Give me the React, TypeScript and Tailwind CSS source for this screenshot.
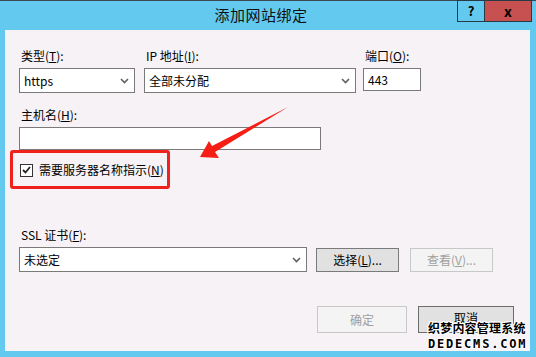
import React from "react";

const font = { fontFamily: '"Noto Sans CJK SC", "Noto Sans", sans-serif' };

function Chevron() {
  return (
    <svg width="9" height="6" viewBox="0 0 9 6" className="shrink-0">
      <path d="M1 1 L4.5 4.5 L8 1" fill="none" stroke="#606060" strokeWidth="1.6" />
    </svg>
  );
}

function Select({ value, w }: { value: string; w: string }) {
  return (
    <div className={`${w} h-[25px] bg-white border border-[#7a7a7a] flex items-center pl-[4px] pr-[5px] text-[12px] text-black`}>
      <span className="flex-1">{value}</span>
      <Chevron />
    </div>
  );
}

function Label({ children }: { children: React.ReactNode }) {
  return <div className="h-[16px] leading-[16px] text-[12px] text-black pl-[2px]">{children}</div>;
}

export default function App() {
  return (
    <div className="relative w-[536px] h-[357px] bg-[#63c9ef] overflow-hidden flex flex-col" style={font}>
      {/* title bar */}
      <div className="relative h-[30px] border-t border-[#3a4a55] flex items-center justify-center pr-[14px]">
        <span className="text-[15px] text-[#111] tracking-[0.5px]">添加网站绑定</span>
        <div className="absolute right-[4px] top-[-1px] flex h-[22px] border border-[#2a3a44]">
          <div className="w-[27px] flex items-center justify-center text-[13px] font-bold text-black border-r border-[#2a3a44]">?</div>
          <div className="w-[46px] bg-[#c75050] flex items-center justify-center text-[14px] font-bold text-black leading-none">x</div>
        </div>
      </div>

      {/* client area */}
      <div className="ml-[5px] mr-[6px] h-[321px] bg-[#f6f2f6] pl-[14px] flex flex-col">
        <div className="mt-[18px] flex">
          <div className="w-[116px] flex flex-col gap-[4px]">
            <Label>类型(<span className="underline">T</span>):</Label>
            <Select value="https" w="w-[116px]" />
          </div>
          <div className="ml-[9px] w-[212px] flex flex-col gap-[4px]">
            <Label>IP 地址(<span className="underline">I</span>):</Label>
            <Select value="全部未分配" w="w-[212px]" />
          </div>
          <div className="ml-[7px] w-[58px] flex flex-col gap-[4px]">
            <Label>端口(<span className="underline">O</span>):</Label>
            <div className="w-[58px] h-[23px] bg-white border border-[#7a7a7a] flex items-center pl-[4px] text-[12px] text-black">443</div>
          </div>
        </div>

        <div className="mt-[14px] flex flex-col gap-[4px]">
          <Label>主机名(<span className="underline">H</span>):</Label>
          <div className="w-[302px] h-[23px] bg-white border border-[#7a7a7a]" />
        </div>

        <div className="mt-[12px] h-[16px] flex items-center">
          <div className="ml-[1px] w-[13px] h-[13px] bg-white border border-[#333] flex items-center justify-center">
            <svg width="9" height="8" viewBox="0 0 9 8">
              <path d="M1 4 L3.5 6.5 L8 1" fill="none" stroke="#222" strokeWidth="1.8" />
            </svg>
          </div>
          <span className="ml-[6px] text-[12px] text-black leading-[16px]">需要服务器名称指示(<span className="underline">N</span>)</span>
        </div>

        <div className="mt-[49px] flex flex-col gap-[4px]">
          <Label>SSL 证书(<span className="underline">F</span>):</Label>
          <div className="flex items-center">
            <Select value="未选定" w="w-[288px]" />
            <div className="ml-[9px] w-[83px] h-[24px] bg-[#e1e1e1] border border-[#7a7a7a] flex items-center justify-center text-[12px] text-black">
              选择(<span className="underline">L</span>)...
            </div>
            <div className="ml-[11px] w-[83px] h-[24px] bg-[#f4f4f4] border border-[#c8c8c8] flex items-center justify-center text-[12px] text-[#a0a0a0]">
              查看(<span className="underline">V</span>)...
            </div>
          </div>
        </div>

        <div className="mt-[34px] flex justify-end pr-[16px] gap-[11px]">
          <div className="w-[90px] h-[27px] bg-[#f4f4f4] border border-[#c8c8c8] flex items-center justify-center text-[12px] text-[#a0a0a0]">确定</div>
          <div className="w-[96px] h-[27px] bg-[#e1e1e1] border border-[#6d6d6d] flex items-start justify-center pt-[2px] text-[12px] text-black">取消</div>
        </div>
      </div>

      {/* red highlight box */}
      <div className="absolute left-[10px] top-[150px] w-[160px] h-[39px] border-[3px] border-[#f0201c] rounded-[3px]" />

      {/* red arrow */}
      <svg className="absolute left-0 top-0" width="536" height="357" viewBox="0 0 536 357">
        <polygon points="200,157 209,141 212,146 288,107 215,152 219,158" fill="#f51d14" />
      </svg>

      {/* watermark */}
      <div
        className="absolute left-[428px] top-[322px] flex flex-col items-start leading-none text-black font-bold"
        style={{ textShadow: "1px 0 #fff, -1px 0 #fff, 0 1px #fff, 0 -1px #fff, 1px 1px #fff, -1px -1px #fff, 1px -1px #fff, -1px 1px #fff" }}
      >
        <span className="text-[12px] tracking-[0.2px]">织梦内容管理系统</span>
        <span className="mt-[4px] text-[12px] tracking-[1.8px]" style={{ fontFamily: '"DejaVu Sans Mono", monospace' }}>DEDECMS.COM</span>
      </div>
    </div>
  );
}
